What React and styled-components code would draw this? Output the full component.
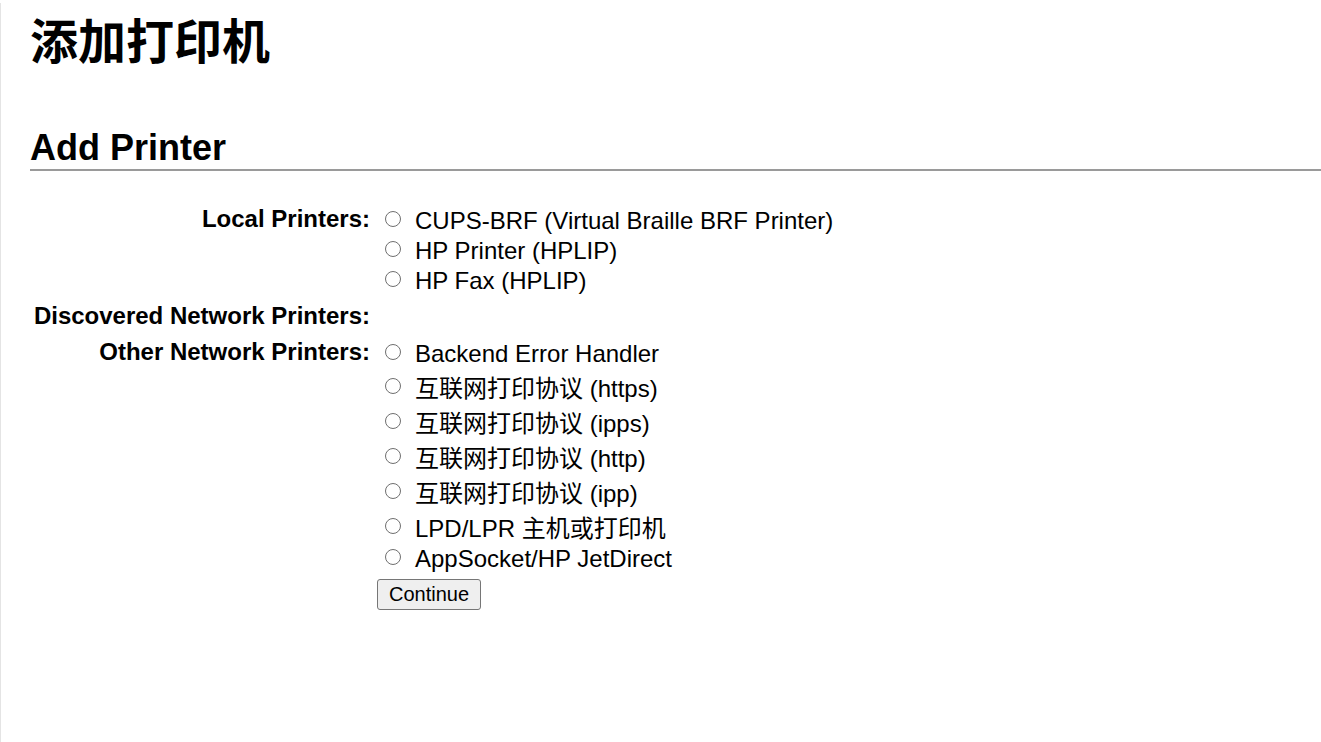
import React from "react";
import styled, { createGlobalStyle } from "styled-components";

const GlobalStyle = createGlobalStyle`
  html, body { margin: 0; padding: 0; background: #fff; }
  body { font-family: "Liberation Sans", Arial, "Noto Sans CJK SC", sans-serif; color: #000; }
`;

const Page = styled.div`
  min-height: 100vh;
  box-sizing: border-box;
  border-left: 1px solid #e4e4e4;
  padding-left: 29px;
`;

const Title = styled.h1`
  margin: 3px 0 0;
  font-family: "Noto Sans CJK SC", sans-serif;
  font-weight: 700;
  font-size: 48px;
  line-height: 70px;
`;

const Heading = styled.h2`
  margin: 54px 0 0;
  padding-bottom: 1px;
  font-family: "Liberation Sans", Arial, sans-serif;
  font-weight: 700;
  font-size: 36px;
  line-height: 41px;
  border-bottom: 2px solid #9a9a9a;
`;

const Form = styled.form`
  margin-top: 35px;
  display: grid;
  grid-template-columns: 340px 1fr;
  column-gap: 7px;
  row-gap: 6.5px;
  font-size: 24px;
`;

const Label = styled.div`
  text-align: right;
  font-weight: 700;
  line-height: 26px;
  white-space: nowrap;
`;

const Options = styled.div`
  display: flex;
  flex-direction: column;
  align-items: flex-start;
  min-height: 30px;
`;

const Option = styled.label`
  display: flex;
  align-items: flex-start;
  height: ${(p) => (p.$cjk ? 35 : 30)}px;
  white-space: nowrap;
`;

const Radio = styled.input.attrs({ type: "radio" })`
  appearance: none;
  -webkit-appearance: none;
  box-sizing: border-box;
  width: 16px;
  height: 16px;
  border: 1.6px solid #6f6f6f;
  border-radius: 50%;
  background: #fff;
  margin: ${(p) => (p.$cjk ? 9 : 4.8)}px 0 0 8px;
  flex: none;
  &:checked {
    background: radial-gradient(circle, #1a73e8 0 4px, #fff 4.5px);
    border-color: #1a73e8;
  }
`;

const OptionText = styled.span`
  margin-left: 14px;
  margin-top: ${(p) => (p.$cjk ? 5.5 : 1.2)}px;
  line-height: 27.6px;
  font-family: "Liberation Sans", Arial, "Noto Sans CJK SC", sans-serif;
`;

const Button = styled.button`
  margin-top: 4.6px;
  width: 104px;
  height: 31.5px;
  padding: 0;
  font-family: "Liberation Sans", Arial, sans-serif;
  font-size: 20px;
  color: #000;
  background: #efefef;
  border: 1px solid #767676;
  border-radius: 3px;
`;

const localPrinters = [
  { text: "CUPS-BRF (Virtual Braille BRF Printer)" },
  { text: "HP Printer (HPLIP)" },
  { text: "HP Fax (HPLIP)" },
];

const otherPrinters = [
  { text: "Backend Error Handler" },
  { text: "互联网打印协议 (https)", cjk: true },
  { text: "互联网打印协议 (ipps)", cjk: true },
  { text: "互联网打印协议 (http)", cjk: true },
  { text: "互联网打印协议 (ipp)", cjk: true },
  { text: "LPD/LPR 主机或打印机", cjk: true },
  { text: "AppSocket/HP JetDirect" },
];

function OptionList({ items }) {
  return items.map((o) => (
    <Option key={o.text} $cjk={o.cjk}>
      <Radio name="device" $cjk={o.cjk} />
      <OptionText $cjk={o.cjk}>{o.text}</OptionText>
    </Option>
  ));
}

export default function App() {
  return (
    <Page>
      <GlobalStyle />
      <Title>添加打印机</Title>
      <Heading>Add Printer</Heading>
      <Form onSubmit={(e) => e.preventDefault()}>
        <Label>Local Printers:</Label>
        <Options>
          <OptionList items={localPrinters} />
        </Options>
        <Label>Discovered Network Printers:</Label>
        <Options />
        <Label>Other Network Printers:</Label>
        <Options>
          <OptionList items={otherPrinters} />
          <Button type="submit">Continue</Button>
        </Options>
      </Form>
    </Page>
  );
}
